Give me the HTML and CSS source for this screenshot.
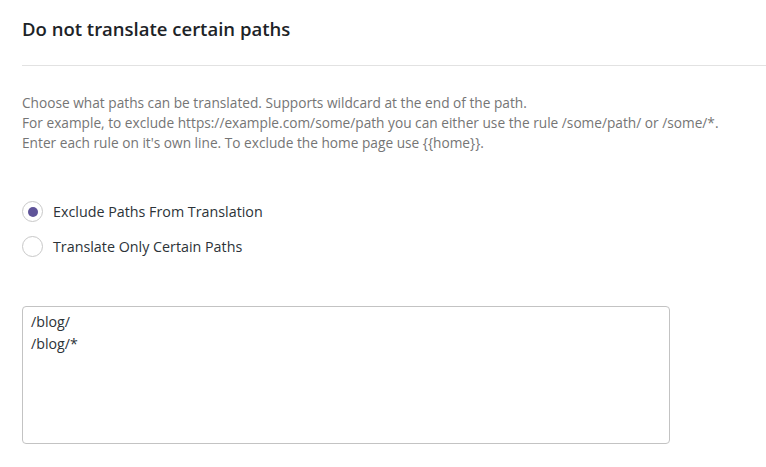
FILE: index.html
```html
<!DOCTYPE html>
<html>
<head>
<meta charset="utf-8">
<link rel="stylesheet" href="styles.css">
</head>
<body>
<div class="panel">
  <h2 class="title">Do not translate certain paths</h2>
  <hr class="divider">
  <p class="desc">Choose what paths can be translated. Supports wildcard at the end of the path.<br>For example, to exclude https://example.com/some/path you can either use the rule /some/path/ or /some/*.<br>Enter each rule on it's own line. To exclude the home page use {{home}}.</p>
  <div class="radios">
    <label class="radio"><span class="circle checked"></span><span class="label">Exclude Paths From Translation</span></label>
    <label class="radio"><span class="circle"></span><span class="label">Translate Only Certain Paths</span></label>
  </div>
  <div class="area">/blog/<br>/blog/*</div>
</div>
</body>
</html>
```
FILE: styles.css
```css
html, body { margin: 0; padding: 0; background: #fff; }
body { font-family: "Open Sans", "Noto Sans", sans-serif; color: #1e1e1e; }
.panel { padding: 17px 0 0 22px; }
.title { margin: 0; font-size: 18.5px; line-height: 24px; font-weight: 600; color: #1d2327; }
.divider { margin: 24px 0 0 0; border: 0; border-top: 1px solid #e2e2e2; height: 0; }
.desc { margin: 27px 0 0 0; font-size: 13.7px; line-height: 20px; color: #757575; }
.radios { margin-top: 48px; display: flex; flex-direction: column; gap: 14px; }
.radio { display: flex; align-items: center; gap: 10px; height: 21px; }
.circle { width: 19px; height: 19px; border: 1px solid #c8c8c8; border-radius: 50%; box-sizing: content-box; display: flex; align-items: center; justify-content: center; }
.circle.checked::after { content: ""; width: 10px; height: 10px; border-radius: 50%; background: #5f5499; }
.label { font-size: 14.3px; color: #2c3338; }
.area { margin-top: 49px; width: 648px; height: 138px; box-sizing: border-box; border: 1px solid #c3c3c3; border-radius: 4px; padding: 4px 8px; font-size: 14.2px; line-height: 22px; color: #2c3338; }
```
